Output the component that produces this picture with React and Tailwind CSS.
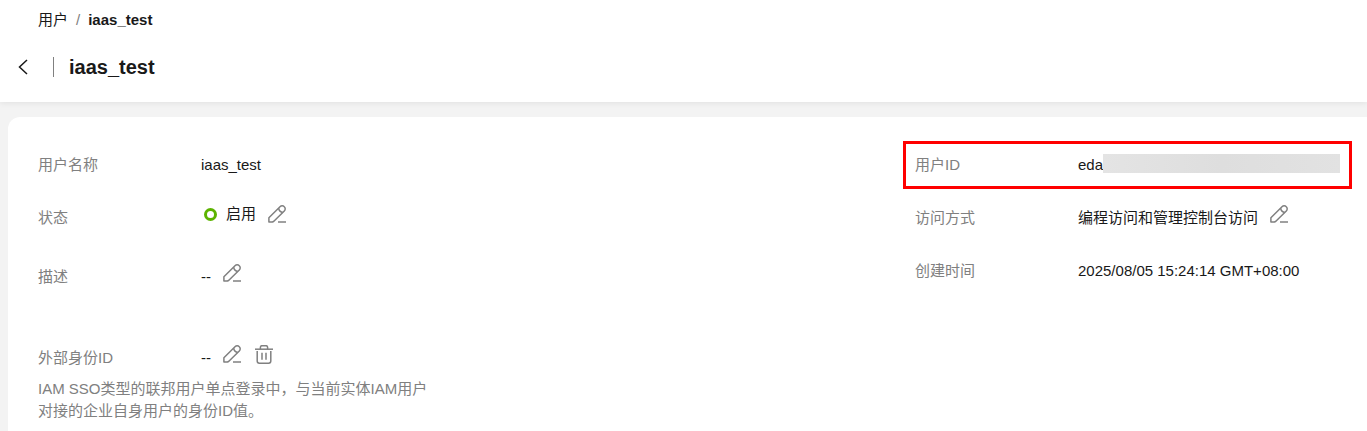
import React from 'react'

const EditIcon = () => (
  <svg viewBox="0 0 18 18" className="block w-[18px] h-[18px]" fill="none" stroke="currentColor" strokeWidth="1.5">
    <path d="M.9 17V12.8L12 1.7a3 3 0 0 1 4.3 0a3 3 0 0 1 0 4.3L5.6 16.5L4.4 17Z" strokeLinejoin="round" />
    <path d="M10.6 3.1q.6 3.8 4.3 4.3" />
    <path d="M10 17h8" />
  </svg>
)

const TrashIcon = () => (
  <svg viewBox="0 0 18 19" className="block w-[18px] h-[19px]" fill="none" stroke="currentColor" strokeWidth="1.5">
    <path d="M0 4.2h18" />
    <path d="M5.4 4.2V2.3a1.6 1.6 0 0 1 1.6-1.6h4a1.6 1.6 0 0 1 1.6 1.6v1.9" />
    <path d="M2.2 6v10a2.2 2.2 0 0 0 2.2 2.2h9.2a2.2 2.2 0 0 0 2.2-2.2V6" />
    <path d="M7 7.8v7M11 7.8v7" />
  </svg>
)

const EditButton = ({ label }) => (
  <button type="button" aria-label={label} className="ml-3 text-[#808080] hover:text-gray-900">
    <EditIcon />
  </button>
)

const Field = ({ label, children }) => (
  <div className="relative flex leading-[26px]">
    <dt className="w-[163px] shrink-0 text-[#808080]">{label}</dt>
    <dd className="flex items-start whitespace-nowrap">{children}</dd>
  </div>
)

const Header = () => (
  <header className="bg-white pt-2 pb-[22px] shadow-[0_1px_6px_rgba(0,0,0,0.08)]">
    <nav aria-label="breadcrumb" className="flex gap-2 pl-[38px] leading-6">
      <a href="#users">用户</a>
      <span className="text-[#808080]">/</span>
      <span className="font-bold">iaas_test</span>
    </nav>
    <div className="mt-[22px] flex items-center pl-[18px]">
      <button type="button" aria-label="返回" className="text-[#191919]">
        <svg viewBox="0 0 10 16" className="block w-[10px] h-4" fill="none" stroke="currentColor" strokeWidth="1.5">
          <path d="M9 1L1.5 8L9 15" />
        </svg>
      </button>
      <span className="ml-[25px] mr-[15px] h-5 w-px bg-[#808080]" />
      <h1 className="text-xl leading-[26px] font-bold">iaas_test</h1>
    </div>
  </header>
)

const App = () => {
  return (
    <div className="min-h-screen overflow-hidden bg-[#f3f3f3] font-['Liberation_Sans','Noto_Sans_CJK_SC',sans-serif] text-[15px] text-[#191919]">
      <Header />
      <main className="mt-[15px] ml-2 grid grid-cols-[877fr_452fr] rounded-tl-xl bg-white pt-[35px] pb-4 pl-[30px]">
        <dl>
          <Field label="用户名称">iaas_test</Field>
          <div className="mt-[27px]">
            <Field label="状态">
              <span className="ml-[3px] mt-[3px] h-[13px] w-[13px] rounded-full border-[3px] border-[#5cb300]" />
              <span className="ml-[9px] leading-[18px]">启用</span>
              <EditButton label="编辑状态" />
            </Field>
          </div>
          <div className="mt-[33px]">
            <Field label="描述">
              --
              <EditButton label="编辑描述" />
            </Field>
          </div>
          <div className="mt-[55px]">
            <Field label="外部身份ID">
              --
              <EditButton label="编辑外部身份ID" />
              <button type="button" aria-label="删除外部身份ID" className="ml-[14px] text-[#808080] hover:text-gray-900">
                <TrashIcon />
              </button>
            </Field>
            <p className="mt-[7px] w-[400px] leading-[22px] text-[#808080]">
              IAM SSO类型的联邦用户单点登录中，与当前实体IAM用户对接的企业自身用户的身份ID值。
            </p>
          </div>
        </dl>

        <dl className="space-y-[27px]">
          <Field label="用户ID">
            eda
            <span className="mt-0.5 h-[19px] w-[237px] bg-linear-to-r from-[#e4e4e4] via-[#dedede] to-[#e2e2e2]" />
            {/* Highlight frame around the row */}
            <span className="pointer-events-none absolute -inset-y-[11px] -left-3 right-[15px] border-[3px] border-[#ff0000]" />
          </Field>
          <Field label="访问方式">
            编程访问和管理控制台访问
            <EditButton label="编辑访问方式" />
          </Field>
          <Field label="创建时间">2025/08/05 15:24:14 GMT+08:00</Field>
        </dl>
      </main>
    </div>
  )
}

export default App
